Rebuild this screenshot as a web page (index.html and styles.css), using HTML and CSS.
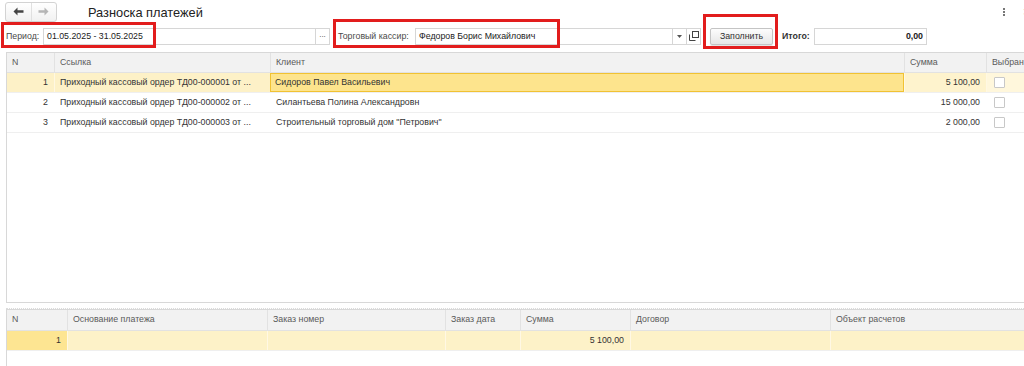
FILE: index.html
```html
<!DOCTYPE html>
<html lang="ru">
<head>
<meta charset="utf-8">
<title>Разноска платежей</title>
<link rel="stylesheet" href="styles.css">
</head>
<body>
<div class="page">
  <div class="topbar">
    <div class="nav">
      <button class="nav-btn">
        <svg width="11" height="9" viewBox="0 0 11 9"><path d="M0.5 4.5 L4.5 0.5 L4.5 3.3 L10.5 3.3 L10.5 5.7 L4.5 5.7 L4.5 8.5 Z" fill="#444"/></svg>
      </button>
      <button class="nav-btn">
        <svg width="11" height="9" viewBox="0 0 11 9"><path d="M10.5 4.5 L6.5 0.5 L6.5 3.3 L0.5 3.3 L0.5 5.7 L6.5 5.7 L6.5 8.5 Z" fill="#b5b5b5"/></svg>
      </button>
    </div>
    <div class="title">Разноска платежей</div>
    <div class="spacer"></div>
    <div class="more"><span></span><span></span><span></span></div>
    <div class="close">×</div>
  </div>

  <div class="filters">
    <span class="lbl period-lbl">Период:</span>
    <div class="field period">01.05.2025 - 31.05.2025</div>
    <div class="fbtn dots">...</div>
    <span class="lbl kassir-lbl">Торговый кассир:</span>
    <div class="field kassir">Федоров Борис Михайлович</div>
    <div class="fbtn"><svg width="5" height="3" viewBox="0 0 5 3"><path d="M0 0 H5 L2.5 3 Z" fill="#555"/></svg></div>
    <div class="fbtn">
      <svg width="10" height="10" viewBox="0 0 10 10"><rect x="3.5" y="0.5" width="6" height="6" fill="none" stroke="#444"/><path d="M0.5 3.5 V9.5 H6.5" fill="none" stroke="#444"/></svg>
    </div>
    <button class="fill-btn">Заполнить</button>
    <span class="lbl bold">Итого:</span>
    <div class="field total">0,00</div>
  </div>

  <div class="grid main">
    <div class="row head">
      <div class="c">N</div><div class="c">Ссылка</div><div class="c">Клиент</div><div class="c">Сумма</div><div class="c">Выбран</div>
    </div>
    <div class="row sel">
      <div class="c r">1</div><div class="c">Приходный кассовый ордер ТД00-000001 от ...</div><div class="c cur">Сидоров Павел Васильевич</div><div class="c r sum">5 100,00</div><div class="c chk"><span class="box"></span></div>
    </div>
    <div class="row">
      <div class="c r">2</div><div class="c">Приходный кассовый ордер ТД00-000002 от ...</div><div class="c">Силантьева Полина Александровн</div><div class="c r">15 000,00</div><div class="c chk"><span class="box"></span></div>
    </div>
    <div class="row">
      <div class="c r">3</div><div class="c">Приходный кассовый ордер ТД00-000003 от ...</div><div class="c">Строительный торговый дом "Петрович"</div><div class="c r">2 000,00</div><div class="c chk"><span class="box"></span></div>
    </div>
  </div>

  <div class="splitter"></div>

  <div class="grid sub">
    <div class="row head">
      <div class="c">N</div><div class="c">Основание платежа</div><div class="c">Заказ номер</div><div class="c">Заказ дата</div><div class="c">Сумма</div><div class="c">Договор</div><div class="c">Объект расчетов</div>
    </div>
    <div class="row sel">
      <div class="c r num">1</div><div class="c"></div><div class="c"></div><div class="c"></div><div class="c r">5 100,00</div><div class="c"></div><div class="c"></div>
    </div>
  </div>

  <div class="mark m1"></div>
  <div class="mark m2"></div>
  <div class="mark m3"></div>
</div>
</body>
</html>
```

FILE: styles.css
```css
* { box-sizing: border-box; }
html, body { margin: 0; padding: 0; background: #fff; }
body {
  font-family: "Liberation Sans", Arial, sans-serif;
  font-size: 8.8px;
  color: #333;
}
.page {
  position: relative;
  width: 1024px;
  height: 366px;
  overflow: hidden;
}

/* top bar */
.topbar {
  display: flex;
  align-items: center;
  height: 22px;
  padding: 1px 0 0 5px;
}
.nav {
  display: flex;
  width: 52px;
  height: 20px;
  border: 1px solid #d3d3d3;
  border-radius: 3px;
  background: linear-gradient(#fff, #f1f1f1);
}
.nav-btn {
  flex: 1;
  border: none;
  background: transparent;
  padding: 0;
  display: flex;
  align-items: center;
  justify-content: center;
}
.nav-btn + .nav-btn { border-left: 1px solid #e0e0e0; }
.title {
  margin-left: 31px;
  font-size: 12.8px;
  color: #222;
  margin-top: 2px;
}
.spacer { flex: 1; }
.more {
  display: flex;
  flex-direction: column;
  gap: 1px;
  margin-right: 18px;
}
.more span { width: 2px; height: 2px; background: #777; }
.close {
  font-size: 12px;
  color: #777;
  margin-right: -6px;
  margin-top: 1px;
}

/* filters */
.filters {
  display: flex;
  align-items: center;
  height: 30px;
  padding: 0 0 2px 6px;
}
.lbl { color: #4a4a4a; white-space: nowrap; flex: none; }
.period-lbl { width: 37px; }
.kassir-lbl { width: 77px; margin-left: 8px; }
.lbl.bold { font-weight: bold; color: #333; margin-left: 9px; width: 32px; }
.field {
  flex: none;
  height: 17px;
  border: 1px solid #d6d6d6;
  background: #fff;
  padding: 0 3px;
  line-height: 15px;
  color: #222;
  white-space: nowrap;
}
.period { width: 273px; }
.kassir { width: 258px; }
.total { width: 113px; text-align: right; font-weight: bold; }
.fbtn {
  flex: none;
  width: 14px;
  height: 17px;
  border: 1px solid #d6d6d6;
  border-left: none;
  display: flex;
  align-items: center;
  justify-content: center;
  font-size: 8px;
  color: #444;
  background: #fff;
}
.fbtn.dots { align-items: flex-end; padding-bottom: 5px; line-height: 1; }
.fill-btn {
  flex: none;
  margin-left: 9px;
  width: 63px;
  height: 17px;
  border: 1px solid #c4c4c4;
  border-radius: 2px;
  background: linear-gradient(#fdfdfd, #e6e6e6);
  font-family: inherit;
  font-size: 8.8px;
  color: #333;
  padding: 0;
  box-shadow: 0 1px 1px rgba(0,0,0,0.12);
}

/* grids */
.grid {
  margin-left: 6px;
  border-left: 1px solid #d8d8d8;
  border-top: 1px solid #d8d8d8;
}
.row { display: grid; height: 20px; border-bottom: 1px solid #efefef; }
.main .row { grid-template-columns: 47px 216px 634px 82px 60px; width: 1039px; }
.sub .row { grid-template-columns: 60px 200px 178px 75px 110px 200px 210px; }
.c {
  padding: 0 5px;
  line-height: 19px;
  white-space: nowrap;
  overflow: hidden;
  border-left: 1px solid transparent;
}
.c:first-child { border-left: none; }
.c.r { text-align: right; padding-right: 6px; }
.row.head { background: #f2f2f2; border-bottom: 1px solid #e2e2e2; }
.row.head .c { color: #5a5a5a; border-left-color: #e2e2e2; }
.main { height: 251px; border-bottom: 1px solid #d8d8d8; }
.main .row.sel { background: #fdf1c7; }
.main .row.sel .c { border-left-color: #fff8e2; }
.main .row.sel .c.cur {
  background: #fde48d;
  border: 1px solid #f1c232;
  line-height: 17px;
  padding-left: 4px;
}
.main .row.sel .c.sum { background: #fef3cd; }
.main .row.sel .c.chk { background: #fff7dc; }
.chk { display: flex; align-items: center; }
.box {
  width: 11px;
  height: 11px;
  border: 1px solid #c8c8c8;
  border-radius: 1px;
  background: #fff;
  margin-left: 2px;
}

.splitter {
  height: 6px;
  margin: 0 0 0 6px;
  border-bottom: 1px dotted #dcdcdc;
}
.sub { height: 60px; }
.sub .row.head { height: 21px; }
.sub .row.sel { background: #fdf2c8; height: 20px; }
.sub .row.sel .c { border-left-color: #fff8e4; }
.sub .row.sel .c.num { background: #fde592; }

/* red annotation frames */
.mark {
  position: absolute;
  border: 3px solid #e21d1d;
}
.m1 { left: 1px; top: 22px; width: 155px; height: 26px; }
.m2 { left: 333px; top: 19px; width: 227px; height: 29px; }
.m3 { left: 703px; top: 14px; width: 75px; height: 35px; }
```
